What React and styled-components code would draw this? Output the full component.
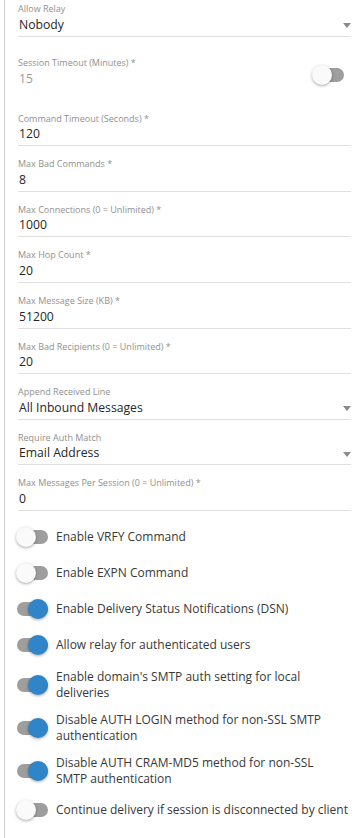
import React from 'react'
import styled, { createGlobalStyle } from 'styled-components'

const Global = createGlobalStyle`
  html, body { margin: 0; padding: 0; background: #fff; }
  body { font-family: "Open Sans", "Liberation Sans", sans-serif; }
`

const fields = [
  { label: 'Allow Relay', value: 'Nobody', select: true },
  { label: 'Session Timeout (Minutes) *', value: '15', session: true },
  { label: 'Command Timeout (Seconds) *', value: '120' },
  { label: 'Max Bad Commands *', value: '8' },
  { label: 'Max Connections (0 = Unlimited) *', value: '1000' },
  { label: 'Max Hop Count *', value: '20' },
  { label: 'Max Message Size (KB) *', value: '51200' },
  { label: 'Max Bad Recipients (0 = Unlimited) *', value: '20' },
  { label: 'Append Received Line', value: 'All Inbound Messages', select: true },
  { label: 'Require Auth Match', value: 'Email Address', select: true },
  { label: 'Max Messages Per Session (0 = Unlimited) *', value: '0' },
]

const toggles = [
  { label: 'Enable VRFY Command', on: false },
  { label: 'Enable EXPN Command', on: false },
  { label: 'Enable Delivery Status Notifications (DSN)', on: true },
  { label: 'Allow relay for authenticated users', on: true },
  { label: "Enable domain's SMTP auth setting for local deliveries", on: true },
  { label: 'Disable AUTH LOGIN method for non-SSL SMTP authentication', on: true },
  { label: 'Disable AUTH CRAM-MD5 method for non-SSL\nSMTP authentication', on: true },
  { label: 'Continue delivery if session is disconnected by client', on: false },
]

const Switch = ({ on }) => (
  <SwitchBox>
    <Track />
    <Thumb $on={on} />
  </SwitchBox>
)

const App = () => {
  return (
    <>
      <Global />
      <Panel>
        <Form>
          {fields.map((f) =>
            f.session ? (
              <SessionField key={f.label}>
                <div>
                  <Label>{f.label}</Label>
                  <Value $muted>{f.value}</Value>
                </div>
                <SessionSwitch>
                  <Switch on={false} />
                </SessionSwitch>
              </SessionField>
            ) : (
              <Field key={f.label}>
                <Label>{f.label}</Label>
                <ValueRow>
                  <Value>{f.value}</Value>
                  {f.select && <Caret />}
                </ValueRow>
              </Field>
            )
          )}
        </Form>
        <ToggleList>
          {toggles.map((t) => (
            <ToggleRow key={t.label}>
              <Switch on={t.on} />
              <ToggleText>{t.label}</ToggleText>
            </ToggleRow>
          ))}
        </ToggleList>
      </Panel>
    </>
  )
}

export default App

const Panel = styled.div`
  margin-left: 4px;
  border-left: 1px solid #cfcfcf;
  min-height: 838px;
  box-sizing: border-box;
  padding: 2px 5px 0 13px;
`

const Form = styled.div`
  display: flex;
  flex-direction: column;
`

const Field = styled.div`
  border-bottom: 1px solid #e0e0e0;
  margin-top: 11px;
  &:first-child { margin-top: 0; }
`

const SessionField = styled.div`
  display: flex;
  justify-content: space-between;
  align-items: flex-end;
  margin-top: 19.5px;
  margin-bottom: 7px;
  padding-bottom: 4px;
`

const SessionSwitch = styled.div`
  margin-bottom: 5px;
  margin-right: 7px;
`

const Label = styled.div`
  font-size: 9px;
  line-height: 13.6px;
  color: #909090;
`

const ValueRow = styled.div`
  display: flex;
  align-items: center;
  justify-content: space-between;
`

const Value = styled.div`
  font-size: 12.2px;
  line-height: 17px;
  padding: 0 0 3px 1px;
  color: ${(p) => (p.$muted ? '#9a9a9a' : '#262626')};
`

const Caret = styled.span`
  width: 0;
  height: 0;
  border-left: 4.5px solid transparent;
  border-right: 4.5px solid transparent;
  border-top: 5px solid #8a8a8a;
`

const ToggleList = styled.div`
  display: flex;
  flex-direction: column;
  margin-top: 8px;
`

const ToggleRow = styled.div`
  display: flex;
  align-items: center;
  gap: 8px;
  min-height: 24px;
  padding: 6px 0;
  margin-left: -2px;
`

const ToggleText = styled.div`
  font-size: 12px;
  line-height: 15.5px;
  color: #383838;
  white-space: pre-line;
`

const SwitchBox = styled.div`
  position: relative;
  flex: 0 0 32px;
  width: 32px;
  height: 20px;
`

const Track = styled.div`
  position: absolute;
  left: 1px;
  right: 0;
  top: 3px;
  height: 14px;
  border-radius: 7px;
  background: #9e9e9e;
`

const Thumb = styled.div`
  position: absolute;
  top: 0;
  left: ${(p) => (p.$on ? '12px' : '0')};
  width: 20px;
  height: 20px;
  border-radius: 50%;
  background: ${(p) => (p.$on ? '#2f85c7' : '#fafafa')};
  box-shadow: 0 1px 3px rgba(0, 0, 0, 0.35);
`
